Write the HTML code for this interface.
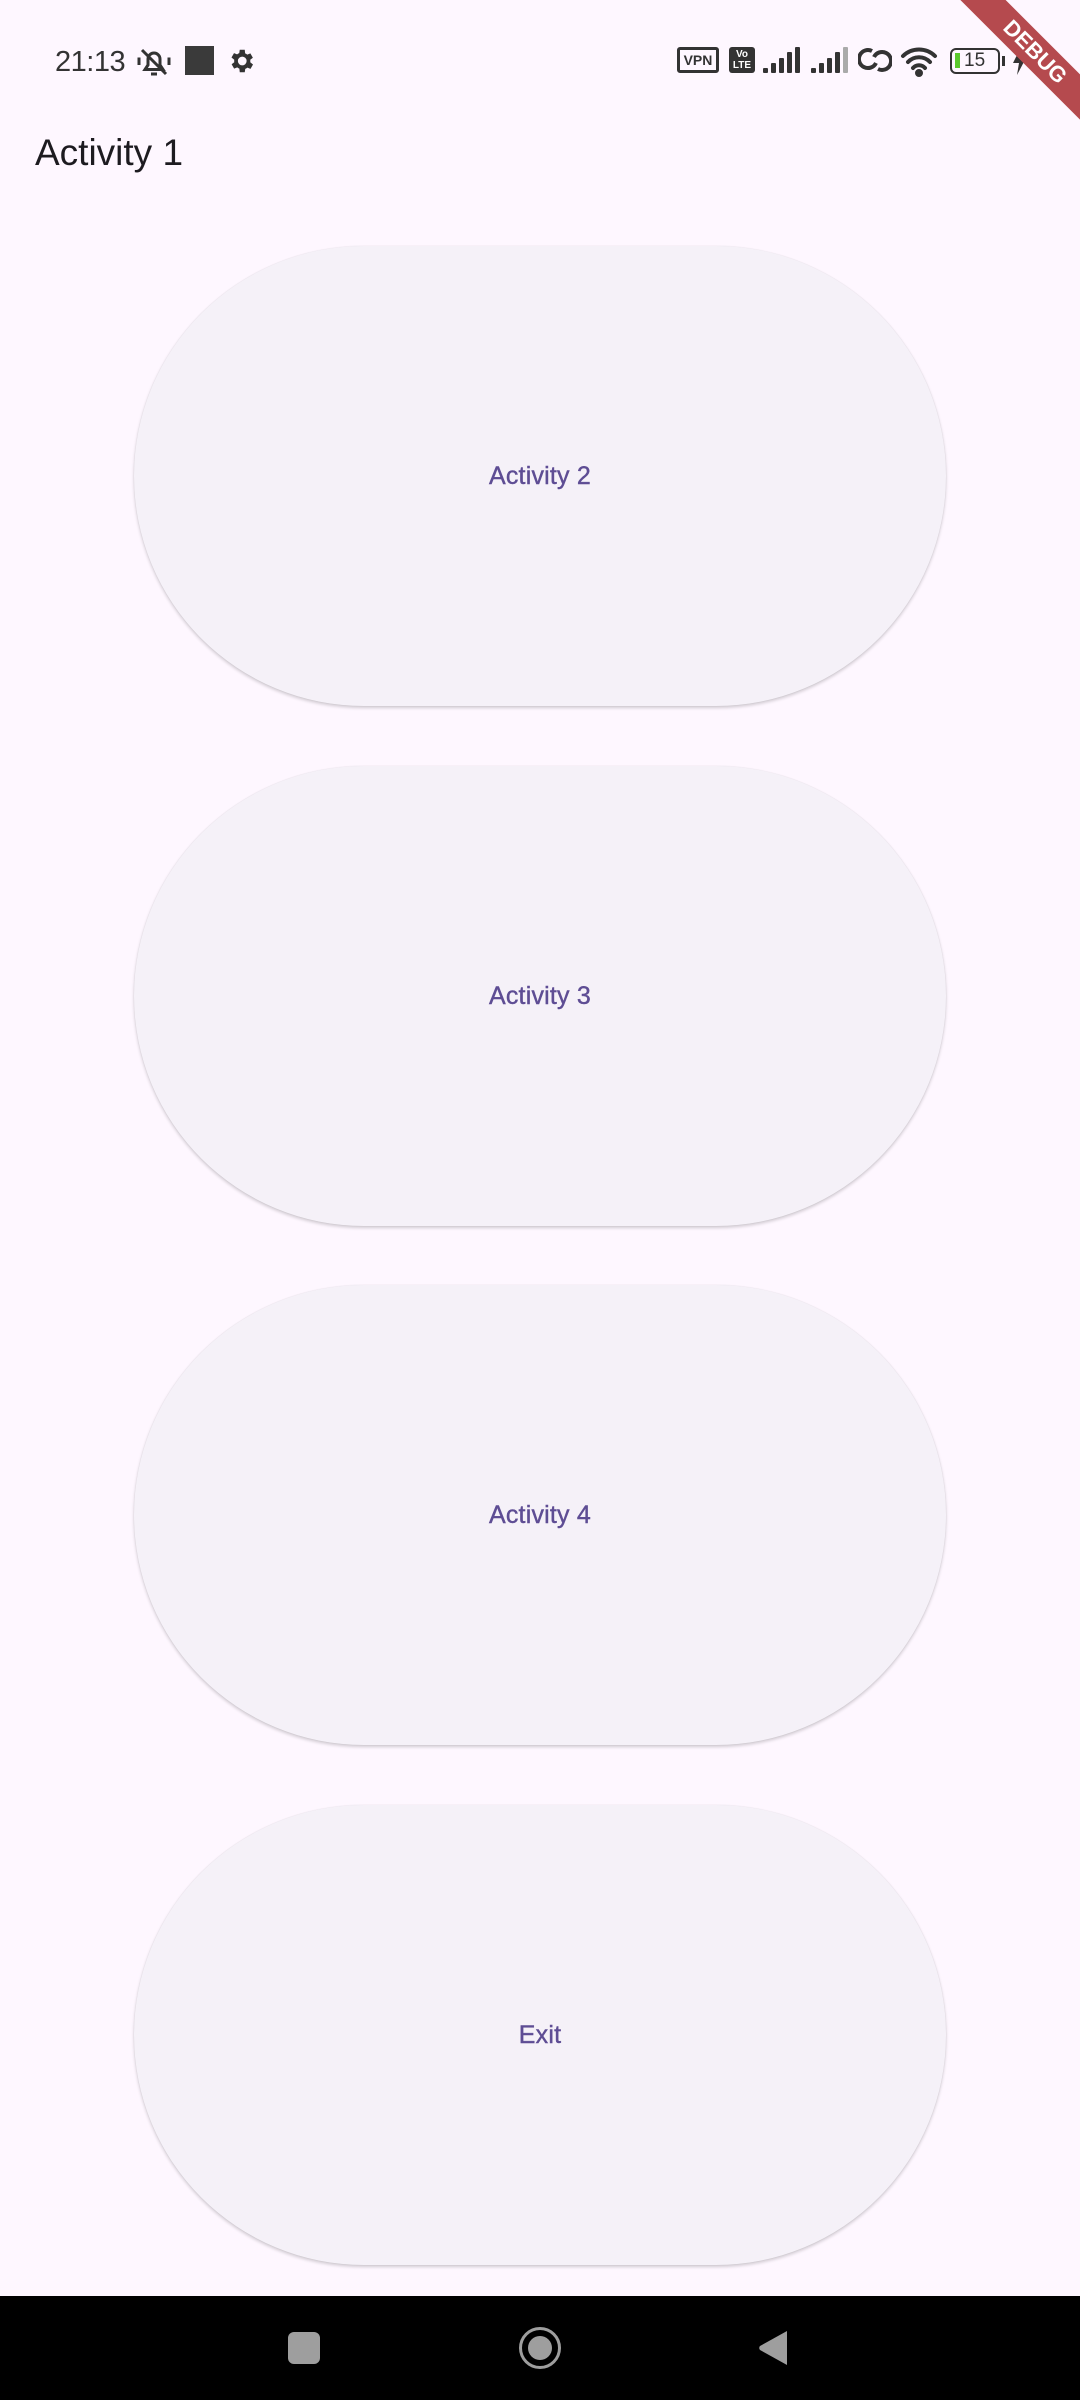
<!DOCTYPE html>
<html><head><meta charset="utf-8"><style>
*{margin:0;padding:0;box-sizing:border-box}
body{width:1080px;height:2400px;background:#FEF7FF;position:relative;overflow:hidden;font-family:"Liberation Sans",sans-serif}
.st{position:absolute;top:46px;left:55px;font-size:29px;color:#333;letter-spacing:-0.5px}
.title{position:absolute;left:35px;top:132px;font-size:37px;color:#1d1b20}
.btn{position:absolute;left:134px;width:812px;height:460px;border-radius:230px;background:#F5F1F8;box-shadow:0 2px 3px rgba(0,0,0,0.18),0 0 1px rgba(0,0,0,0.12);display:flex;align-items:center;justify-content:center;color:#5E4D94;font-size:25px;font-weight:normal;letter-spacing:0.2px;-webkit-text-stroke:0.4px #5E4D94}
.nav{position:absolute;left:0;top:2296px;width:1080px;height:104px;background:#000}
.banner{position:absolute;left:935px;top:36px;width:200px;height:32px;background:#B54A4E;transform:rotate(45deg);color:#fff;font-weight:bold;font-size:22px;text-align:center;line-height:32px}
</style></head><body>
<div class="st">21:13</div>
<svg style="position:absolute;left:136px;top:44px" width="36" height="36" viewBox="0 0 24 24" fill="none" stroke="#333" stroke-width="2"><path d="M6 17h12l-2-3v-4a4 4 0 0 0-8 0v4z"/><path d="M10 20h4"/><path d="M4 4l16 16"/><path d="M2 9v5M22 9v5"/></svg>
<div style="position:absolute;left:185px;top:46px;width:29px;height:29px;background:#3a3a3a"></div>
<svg style="position:absolute;left:226px;top:46px" width="30" height="30" viewBox="0 0 24 24"><path fill="#333" d="M19.4 13a7.5 7.5 0 0 0 0-2l2.1-1.6-2-3.5-2.5 1a7.5 7.5 0 0 0-1.700-1L15 3h-4l-.4 2.7a7.5 7.5 0 0 0-1.7 1l-2.5-1-2 3.5L6.6 11a7.5 7.5 0 0 0 0 2l-2.1 1.6 2 3.5 2.5-1a7.5 7.5 0 0 0 1.7 1L11 21h4l.4-2.7a7.5 7.5 0 0 0 1.7-1l2.5 1 2-3.5zM13 15.5a3.5 3.5 0 1 1 0-7 3.5 3.5 0 0 1 0 7z"/></svg>
<div style="position:absolute;left:677px;top:47px;width:42px;height:26px;border:3px solid #333;border-radius:3px;font-size:14px;font-weight:bold;color:#333;text-align:center;line-height:20px">VPN</div>
<div style="position:absolute;left:729px;top:47px;width:26px;height:26px;background:#333;border-radius:3px;color:#fff;font-size:10px;font-weight:bold;text-align:center;line-height:11px;padding-top:2px">Vo<br>LTE</div>
<svg style="position:absolute;left:763px;top:47px" width="90" height="27"><g fill="#333"><rect x="0" y="21" width="5" height="5" rx="1"/><rect x="8" y="16" width="5" height="10" rx="1"/><rect x="16" y="11" width="5" height="15" rx="1"/><rect x="24" y="5" width="5" height="21" rx="1"/><rect x="32" y="0" width="5" height="26" rx="1"/><rect x="48" y="21" width="5" height="5" rx="1"/><rect x="56" y="16" width="5" height="10" rx="1"/><rect x="64" y="11" width="5" height="15" rx="1"/><rect x="72" y="5" width="5" height="21" rx="1"/></g><rect x="80" y="0" width="5" height="26" rx="1" fill="#aaa"/></svg>
<svg style="position:absolute;left:858px;top:45px" width="34" height="30" viewBox="0 0 34 30" fill="none" stroke="#333" stroke-width="4"><path d="M14 6a9 9 0 1 0 4 12M20 24a9 9 0 1 0-4-12"/></svg>
<svg style="position:absolute;left:900px;top:45px" width="38" height="32" viewBox="0 0 38 32" fill="none" stroke="#333" stroke-width="4" stroke-linecap="round"><path d="M3 11a23 23 0 0 1 32 0M8 17a15 15 0 0 1 22 0M13 23a8 8 0 0 1 12 0"/><circle cx="19" cy="28" r="2" fill="#333"/></svg>
<div style="position:absolute;left:950px;top:48px;width:50px;height:26px;border:2.5px solid #333;border-radius:6px"><div style="position:absolute;left:3px;top:3px;width:5px;height:15px;background:#5ac82c"></div><div style="position:absolute;left:12px;top:0;font-size:19px;color:#333;line-height:21px">15</div></div>
<div style="position:absolute;left:1002px;top:56px;width:3px;height:10px;background:#333"></div>
<svg style="position:absolute;left:1011px;top:47px" width="16" height="28" viewBox="0 0 16 28"><path d="M10 0L2 16h6l-2 12 9-17H9z" fill="#333"/></svg>
<div class="banner">DEBUG</div>
<div class="title">Activity 1</div>
<div class="btn" style="top:246px">Activity 2</div>
<div class="btn" style="top:766px">Activity 3</div>
<div class="btn" style="top:1285px">Activity 4</div>
<div class="btn" style="top:1805px">Exit</div>
<div class="nav">
<div style="position:absolute;left:288px;top:36px;width:32px;height:32px;border-radius:6px;background:#9e9e9e"></div>
<div style="position:absolute;left:519px;top:31px;width:42px;height:42px;border-radius:50%;border:3px solid #9e9e9e"><div style="position:absolute;left:6px;top:6px;width:24px;height:24px;border-radius:50%;background:#9e9e9e"></div></div>
<svg style="position:absolute;left:757px;top:33px" width="32" height="38" viewBox="0 0 32 38"><path d="M30 2v34L3 21a3 3 0 0 1 0-4z" fill="#9e9e9e"/></svg>
</div>
</body></html>
